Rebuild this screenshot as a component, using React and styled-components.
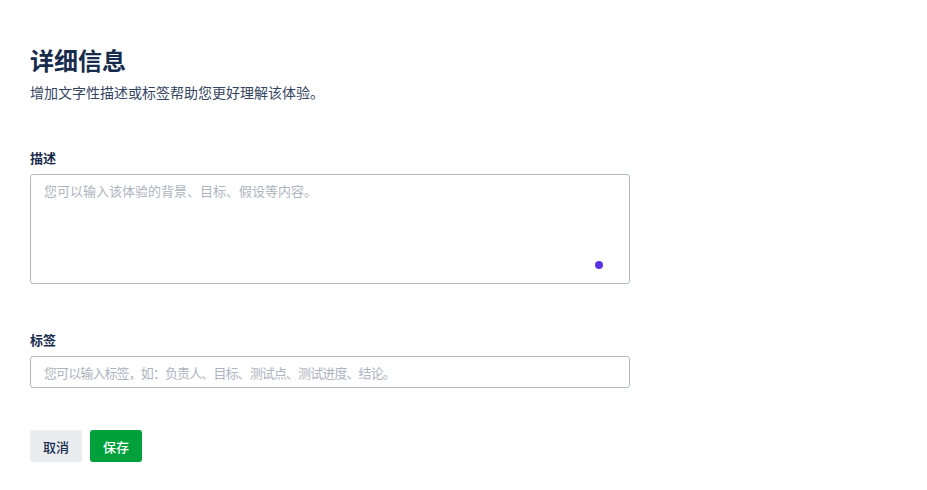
import React from "react";
import styled, { createGlobalStyle } from "styled-components";

const Global = createGlobalStyle`
  html, body { margin: 0; padding: 0; background: #fff; }
  body { font-family: "Noto Sans CJK SC", "Noto Sans", sans-serif; color: #172b4d; }
  * { box-sizing: border-box; }
`;

const Page = styled.div`
  padding: 45px 30px 0 30px;
  display: flex;
  flex-direction: column;
`;

const Title = styled.h1`
  margin: 0;
  font-size: 24px;
  line-height: 30px;
  font-weight: 700;
  color: #172b4d;
`;

const Subtitle = styled.p`
  margin: 6px 0 0 0;
  font-size: 14px;
  line-height: 22px;
  color: #344563;
`;

const Field = styled.div`
  display: flex;
  flex-direction: column;
  gap: 6px;
  width: 600px;
  margin-top: ${(p) => p.$top}px;
`;

const Label = styled.label`
  font-size: 13px;
  line-height: 20px;
  font-weight: 700;
  color: #172b4d;
`;

const AreaWrap = styled.div`
  position: relative;
`;

const TextArea = styled.textarea`
  display: block;
  width: 600px;
  height: 110px;
  resize: none;
  border: 1px solid #b3b9c4;
  border-radius: 3px;
  padding: 6px 13px;
  font-family: inherit;
  font-size: 13px;
  line-height: 20px;
  color: #172b4d;
  outline: none;
  &::placeholder { color: #adb4c0; }
`;

const Dot = styled.span`
  position: absolute;
  right: 27px;
  bottom: 15px;
  width: 8px;
  height: 8px;
  border-radius: 50%;
  background: #5b32e6;
`;

const Input = styled.input`
  display: block;
  width: 600px;
  height: 32px;
  border: 1px solid #b3b9c4;
  border-radius: 3px;
  padding: 0 13px;
  font-family: inherit;
  font-size: 13px;
  letter-spacing: -0.9px;
  color: #172b4d;
  outline: none;
  &::placeholder { color: #adb4c0; }
`;

const Actions = styled.div`
  display: flex;
  gap: 8px;
  margin-top: 42px;
`;

const Button = styled.button`
  height: 32px;
  padding: 0 13px;
  border: none;
  border-radius: 3px;
  font-family: inherit;
  font-size: 13px;
  font-weight: 500;
  cursor: pointer;
  background: ${(p) => (p.$primary ? "#00a13b" : "#ebecf0")};
  color: ${(p) => (p.$primary ? "#ffffff" : "#172b4d")};
`;

export default function App() {
  return (
    <>
      <Global />
      <Page>
        <Title>详细信息</Title>
        <Subtitle>增加文字性描述或标签帮助您更好理解该体验。</Subtitle>
        <Field $top={45}>
          <Label>描述</Label>
          <AreaWrap>
            <TextArea placeholder="您可以输入该体验的背景、目标、假设等内容。" />
            <Dot />
          </AreaWrap>
        </Field>
        <Field $top={46}>
          <Label>标签</Label>
          <Input placeholder="您可以输入标签，如：负责人、目标、测试点、测试进度、结论。" />
        </Field>
        <Actions>
          <Button>取消</Button>
          <Button $primary>保存</Button>
        </Actions>
      </Page>
    </>
  );
}
